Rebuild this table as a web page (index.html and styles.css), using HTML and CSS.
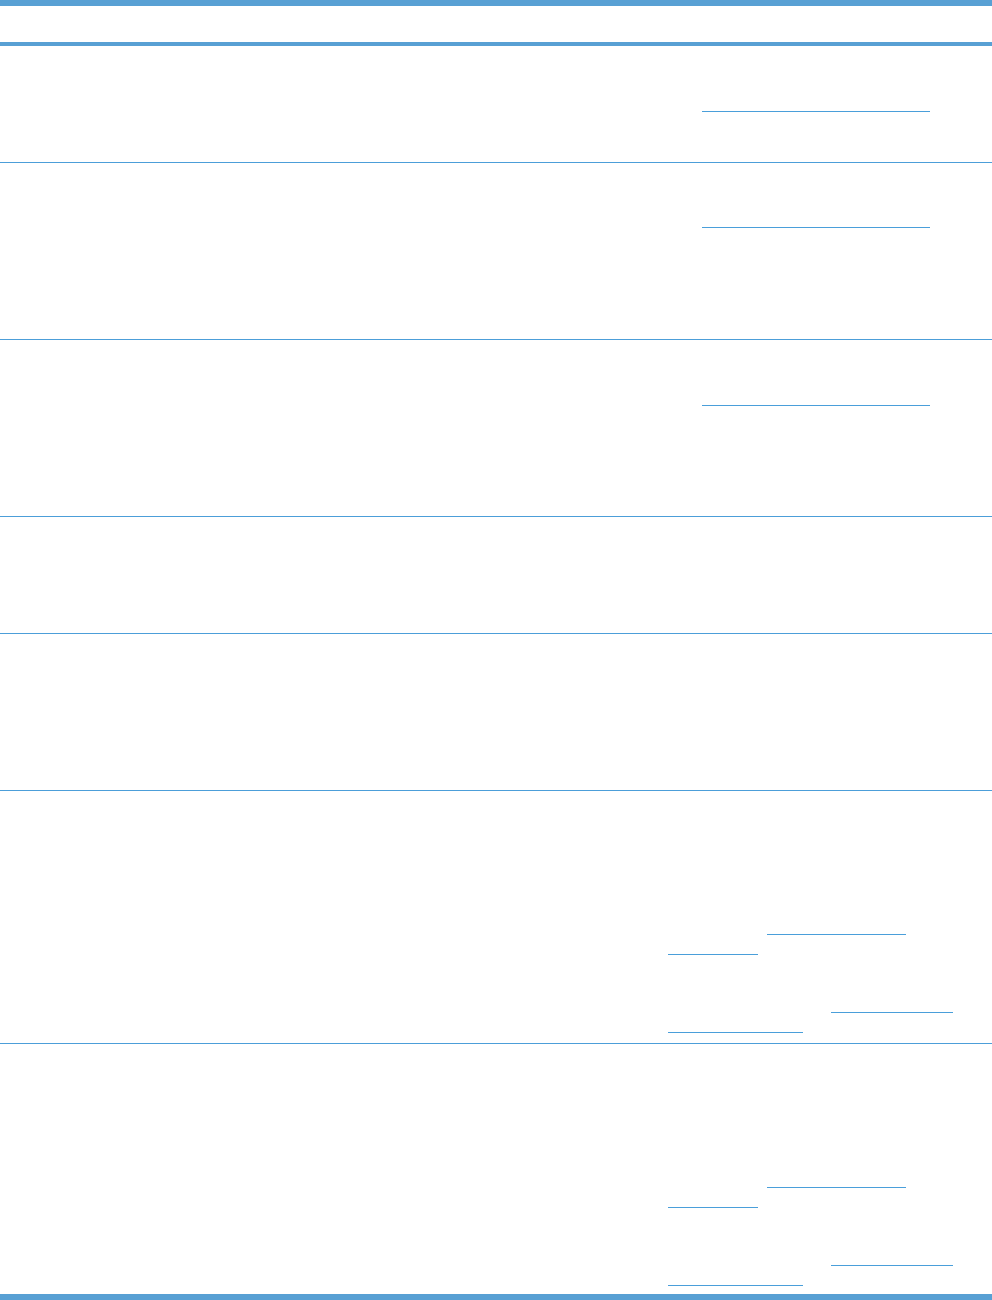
FILE: index.html
```html
<!DOCTYPE html>
<html lang="en">
<head>
  <meta charset="UTF-8">
  <title>Table</title>
  <link rel="stylesheet" href="styles.css">
</head>
<body>
  <div class="spec-table">
    <!-- Header -->
    <div class="spec-head">
      <div class="head-cell first"></div>
      <div class="head-cell"></div>
      <div class="head-cell"></div>
    </div>

    <div class="spec-row h117">
      <div class="cell"></div>
      <div class="cell"></div>
      <div class="cell notes pad9">
        <div class="ln"></div>
        <div class="ln"></div>
        <div class="ln"><a class="u u-full" href="#"></a></div>
      </div>
    </div>

    <div class="spec-row h177">
      <div class="cell"></div>
      <div class="cell"></div>
      <div class="cell notes pad8">
        <div class="ln"></div>
        <div class="ln"></div>
        <div class="ln"><a class="u u-full" href="#"></a></div>
      </div>
    </div>

    <div class="spec-row h177">
      <div class="cell"></div>
      <div class="cell"></div>
      <div class="cell notes pad9">
        <div class="ln"></div>
        <div class="ln"></div>
        <div class="ln"><a class="u u-full" href="#"></a></div>
      </div>
    </div>

    <div class="spec-row h117">
      <div class="cell"></div>
      <div class="cell"></div>
      <div class="cell notes"></div>
    </div>

    <div class="spec-row h157">
      <div class="cell"></div>
      <div class="cell"></div>
      <div class="cell notes"></div>
    </div>

    <div class="spec-row h253">
      <div class="cell"></div>
      <div class="cell"></div>
      <div class="cell notes pad7">
        <div class="ln"></div>
        <div class="ln"></div>
        <div class="ln"></div>
        <div class="ln"></div>
        <div class="ln"></div>
        <div class="ln"></div>
        <div class="ln"><a class="u u-a" href="#"></a></div>
        <div class="ln"><a class="u u-b" href="#"></a></div>
        <div class="para-gap"></div>
        <div class="ln"></div>
        <div class="ln"><a class="u u-c" href="#"></a></div>
        <div class="ln"><a class="u u-d" href="#"></a></div>
      </div>
    </div>

    <div class="spec-row h250 last">
      <div class="cell"></div>
      <div class="cell"></div>
      <div class="cell notes pad7">
        <div class="ln"></div>
        <div class="ln"></div>
        <div class="ln"></div>
        <div class="ln"></div>
        <div class="ln"></div>
        <div class="ln"></div>
        <div class="ln"><a class="u u-a" href="#"></a></div>
        <div class="ln"><a class="u u-b" href="#"></a></div>
        <div class="para-gap"></div>
        <div class="ln"></div>
        <div class="ln"><a class="u u-c" href="#"></a></div>
        <div class="ln"><a class="u u-d" href="#"></a></div>
      </div>
    </div>
  </div>
</body>
</html>
```

FILE: styles.css
```css
:root {
  --bar-color: #58a0d4;
  --rule-color: #4c9ed9;
  --link-color: #4a9fda;
}

body {
  margin: 0;
  padding: 0;
  background: #fff;
  font-family: "Liberation Sans", Arial, sans-serif;
  font-size: 14px;
}

/* Table frame */
.spec-table {
  width: 992px;
  border-top: 6px solid var(--bar-color);
  border-bottom: 6px solid var(--bar-color);
}

.spec-head {
  display: grid;
  grid-template-columns: 330px 338px 1fr;
  height: 40px;
}

.head-cell {
  border-bottom: 4px solid var(--bar-color);
}

/* Body rows */
.spec-row {
  display: grid;
  grid-template-columns: 330px 338px 1fr;
  box-sizing: border-box;
  border-bottom: 1px solid var(--rule-color);
}

.spec-row.last {
  border-bottom: none;
}

.h117 { height: 117px; }
.h157 { height: 157px; }
.h177 { height: 177px; }
.h250 { height: 250px; }
.h253 { height: 253px; }

.pad7 { padding-top: 7px; }
.pad8 { padding-top: 8px; }
.pad9 { padding-top: 9px; }

/* Notes column */
.ln {
  height: 20px;
  display: flex;
  align-items: flex-end;
}

.para-gap {
  height: 18px;
}

.u {
  display: block;
  height: 0;
  margin-bottom: 3px;
  border-bottom: 1px solid var(--link-color);
}

.u-full { margin-left: 34px; width: 228px; }
.u-a { margin-left: 99px; width: 139px; }
.u-b { width: 90px; }
.u-c { margin-left: 163px; width: 122px; }
.u-d { width: 135px; }
```
